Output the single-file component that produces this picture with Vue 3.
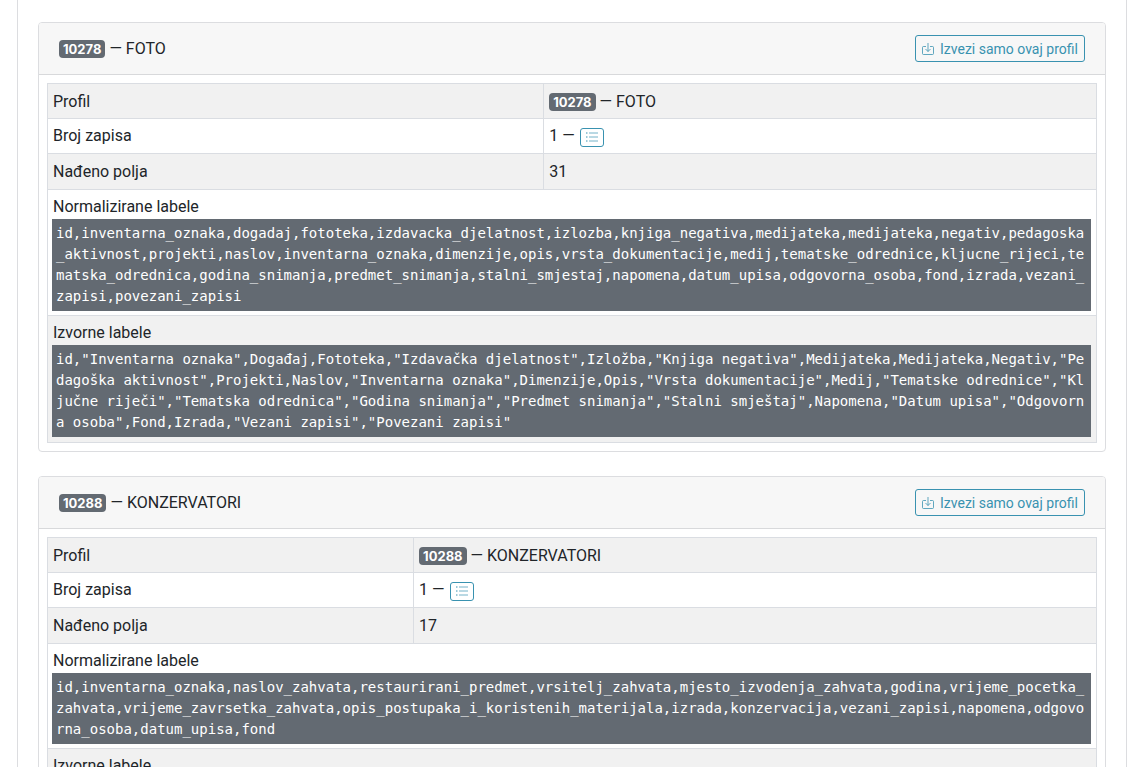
<script setup>
const profiles = [
  {
    id: '10278',
    name: 'FOTO',
    records: 1,
    fields: 31,
    layout: 'wide-key',
    normalized:
      'id,inventarna_oznaka,dogadaj,fototeka,izdavacka_djelatnost,izlozba,knjiga_negativa,medijateka,medijateka,negativ,pedagoska_aktivnost,projekti,naslov,inventarna_oznaka,dimenzije,opis,vrsta_dokumentacije,medij,tematske_odrednice,kljucne_rijeci,tematska_odrednica,godina_snimanja,predmet_snimanja,stalni_smjestaj,napomena,datum_upisa,odgovorna_osoba,fond,izrada,vezani_zapisi,povezani_zapisi',
    original:
      'id,"Inventarna oznaka",Događaj,Fototeka,"Izdavačka djelatnost",Izložba,"Knjiga negativa",Medijateka,Medijateka,Negativ,"Pedagoška aktivnost",Projekti,Naslov,"Inventarna oznaka",Dimenzije,Opis,"Vrsta dokumentacije",Medij,"Tematske odrednice","Ključne riječi","Tematska odrednica","Godina snimanja","Predmet snimanja","Stalni smještaj",Napomena,"Datum upisa","Odgovorna osoba",Fond,Izrada,"Vezani zapisi","Povezani zapisi"',
  },
  {
    id: '10288',
    name: 'KONZERVATORI',
    records: 1,
    fields: 17,
    layout: 'narrow-key',
    normalized:
      'id,inventarna_oznaka,naslov_zahvata,restaurirani_predmet,vrsitelj_zahvata,mjesto_izvodenja_zahvata,godina,vrijeme_pocetka_zahvata,vrijeme_zavrsetka_zahvata,opis_postupaka_i_koristenih_materijala,izrada,konzervacija,vezani_zapisi,napomena,odgovorna_osoba,datum_upisa,fond',
    original: '',
  },
]
</script>

<template>
  <div class="viewport">
    <main class="panel">
      <section v-for="p in profiles" :key="p.id" class="card">
        <header class="card-header">
          <div class="title"><span class="badge">{{ p.id }}</span> — {{ p.name }}</div>
          <button type="button" class="export">
            <svg class="export-icon" viewBox="0 0 12 12" aria-hidden="true">
              <path d="M4 3.5H1.5a1 1 0 0 0-1 1v6a1 1 0 0 0 1 1h9a1 1 0 0 0 1-1v-6a1 1 0 0 0-1-1H8M6 0v8.5M3.5 6 6 8.5 8.5 6" />
            </svg>
            <span>Izvezi samo ovaj profil</span>
          </button>
        </header>
        <div class="card-body">
          <table :class="p.layout">
            <colgroup>
              <col class="key" />
              <col />
            </colgroup>
            <tbody>
              <tr class="profile">
                <td>Profil</td>
                <td><span class="badge">{{ p.id }}</span> — {{ p.name }}</td>
              </tr>
              <tr>
                <td>Broj zapisa</td>
                <td>
                  <span class="records">
                    <span>{{ p.records }} —</span>
                    <button type="button" class="list" aria-label="Popis zapisa">
                      <svg class="list-icon" viewBox="0 0 12 12" aria-hidden="true">
                        <path class="lines" d="M3 2h9M3 6h9M3 10h9" />
                        <path class="dots" d="M0 2h1.5M0 6h1.5M0 10h1.5" />
                      </svg>
                    </button>
                  </span>
                </td>
              </tr>
              <tr class="count">
                <td>Nađeno polja</td>
                <td>{{ p.fields }}</td>
              </tr>
              <tr>
                <td colspan="2">
                  <div class="label">Normalizirane labele</div>
                  <code class="dump">{{ p.normalized }}</code>
                </td>
              </tr>
              <tr>
                <td colspan="2">
                  <div class="label">Izvorne labele</div>
                  <code v-if="p.original" class="dump">{{ p.original }}</code>
                </td>
              </tr>
            </tbody>
          </table>
        </div>
      </section>
    </main>
  </div>
</template>

<style>
body {
  margin: 0;
  background: #fff;
}
</style>

<style scoped>
* {
  box-sizing: border-box;
}
.viewport {
  height: 100vh;
  overflow: hidden;
  padding: 0 20px 0 17px;
  color: #212529;
  font-family: Roboto, "Liberation Sans", sans-serif;
  font-size: 16px;
  line-height: 24px;
}
.panel {
  min-height: 100%;
  padding: 22px 20px 0;
  border: solid #dcdde0;
  border-width: 0 1px;
}
.card {
  margin-bottom: 24px;
  border: 1px solid #dcdde0;
  border-radius: 4px;
  background: #fff;
}
.card-header {
  display: flex;
  align-items: center;
  justify-content: space-between;
  height: 52px;
  padding: 0 20px;
  border-bottom: 1px solid #d8d9db;
  border-radius: 3px 3px 0 0;
  background: #f7f7f7;
}
.badge {
  display: inline-block;
  padding: 3px 4px;
  border-radius: 4px;
  background: #636a72;
  color: #fff;
  font-family: Inter, sans-serif;
  font-size: 13px;
  font-weight: 700;
  line-height: 12px;
}
button {
  display: inline-flex;
  align-items: center;
  justify-content: center;
  border: 1px solid #3992b0;
  border-radius: 3px;
  background: transparent;
  color: #3992b0;
  font-family: inherit;
}
.export {
  gap: 6px;
  min-width: 170px;
  height: 27px;
  padding: 0 5px;
  font-size: 14px;
}
svg {
  fill: none;
  stroke: currentColor;
  stroke-width: 1;
}
.export-icon {
  width: 12px;
  height: 12px;
}
.export-icon path {
  stroke-opacity: 0.8;
}
.card-body {
  padding: 8px;
}
table {
  width: 100%;
  border-collapse: collapse;
  table-layout: fixed;
}
.wide-key .key {
  width: 47.3%;
}
.narrow-key .key {
  width: 34.9%;
}
tr {
  height: 35px;
}
.count {
  height: 36px;
}
tr:nth-child(odd) {
  background: #f1f1f1;
}
td {
  padding: 4px 5px;
  border: 1px solid #dadde2;
}
td[colspan] {
  padding-left: 4px;
}
.profile td {
  padding-top: 6px;
}
tr:last-child td {
  padding-bottom: 5px;
}
.records {
  display: flex;
  align-items: center;
  gap: 5px;
}
.list {
  width: 24px;
  height: 19px;
  margin-top: 2px;
  padding: 0;
}
.list-icon {
  width: 12px;
  height: 12px;
}
.lines {
  stroke-opacity: 0.7;
}
.label {
  padding: 1px 0 0 1px;
}
.dump {
  display: block;
  padding: 4px;
  background: #636a72;
  color: #fff;
  font-family: "DejaVu Sans Mono", "Liberation Mono", monospace;
  font-size: 14px;
  line-height: 21px;
  word-break: break-all;
}
</style>
